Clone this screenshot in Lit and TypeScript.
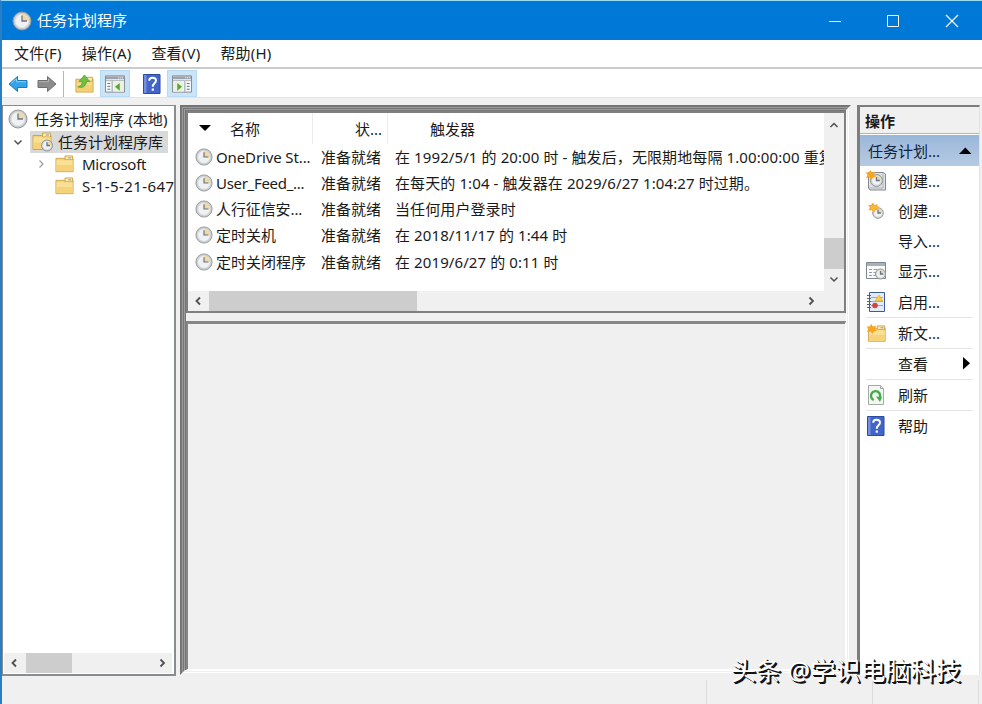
import { LitElement, html, css, svg, nothing } from "lit";
import { customElement, property } from "lit/decorators.js";
import { classMap } from "lit/directives/class-map.js";
import { styleMap } from "lit/directives/style-map.js";

const folder = svg`
  <path d="M1 3.500h18v14H1z" fill="#f3d277" stroke="#d0a548"/>
  <path d="M10.500 1h8v4h-8z" fill="#fbe8b0" stroke="#d0a548"/>
  <path d="M14 3h3" stroke="#7d9dc0" />
  <path d="M1.500 5.500h17v11.500h-17z" fill="#fae096"/>
  <path d="M1.500 10.500h17v6.500h-17z" fill="#f3cd6d" opacity=".7"/>`;

const clock = (cx: number, cy: number, r: number) => svg`
  <circle cx=${cx} cy=${cy} r=${r} fill="#c9cccf" stroke="#94989c"/>
  <circle cx=${cx} cy=${cy} r=${r * 0.76} fill="#eff1f3" stroke="#dfe2e4" stroke-width=".7"/>
  <path d=${`M${cx} ${cy - r * 0.74}A${r * 0.74} ${r * 0.74} 0 0 1 ${cx + r * 0.74} ${cy}H${cx}z`} fill="#f0d9a0"/>
  <path d=${`M${cx} ${cy - r * 0.6}V${cy}H${cx + r * 0.55}`} fill="none" stroke="#64748a" stroke-width="1.300"/>`;

const star = (x: number, y: number) => svg`
  <path transform=${`translate(${x} ${y})`} d="M0-5L1.300-2.500 4.500-3.200 3.500-.3 5.500 2 2.500 2.500 .8 5-1 2.500-4.500 3-3 0-5-2.500-2-2.500z" fill="#f8a622"/>`;

const panel = (flip: boolean) => svg`
  <path d="M.5 1.500h20v17H.5z" fill="#f7f8fa" stroke="#81868f"/>
  <path d="M1 2h19v3H1z" fill="#9ba2ad"/><path d="M14 3.500h1M16 3.500h1M18 3.500h1" stroke="#fff"/>
  <path d="M1 6.500h19" stroke="#a9afb8"/>
  <g transform=${flip ? "translate(21 0) scale(-1 1)" : ""}>
    <path d="M7.500 7v11" stroke="#9097a1"/>
    <path d="M2.500 9.500h3M2.500 12.500h3M2.500 15.500h3" stroke="#56708c"/>
    <path d="M9 8h11v10H9z" fill="#e9f2e0"/>
    <path d="M15.500 9v8l-5-4z" fill="#58a62c"/>
  </g>`;

const icons: Record<string, unknown> = {
  clock: clock(10, 10, 9),
  folder,
  library: svg`${folder}${clock(15, 13.5, 5.5)}`,
  back: svg`<path d="M1 10l8.500-7.500v4h9.500v7H9.500v4z" fill="#31a5e8" stroke="#2477b2"/><path d="M3 9.500l5.500-4.800v3H18" fill="none" stroke="#85d3fa"/>`,
  forward: svg`<path d="M19 10l-8.500-7.500v4H1v7h9.500v4z" fill="#8c8c8c" stroke="#6e6e6e"/><path d="M2 7.700h9.500v-3" fill="none" stroke="#b3b3b3"/>`,
  up: svg`<path d="M1 5.500h18v13.500H1z" fill="#f7da86" stroke="#cda245"/><path d="M12 3.500h6.500v4H12z" fill="#fbe8b0" stroke="#cda245"/><path d="M1.500 12h17v6.500h-17z" fill="#f0c866" opacity=".6"/>
    <path d="M3 13.500c3.500-.5 4.500-2.500 4.500-5.500H4L10 1l5.500 7H12c0 4.500-4 7.500-9 5.500z" fill="#6cc043" stroke="#4a9a2b" stroke-width=".7"/>`,
  help: svg`<path d="M1.500 .5h16.500v19H1.500z" fill="#4364c8" stroke="#2b4aa0"/><path d="M2 1h2.500v18H2z" fill="#7390e0"/>
    <path d="M7.200 6.800c0-4 6.800-4 6.800-.3 0 2.800-3.200 2.800-3.200 6.200" fill="none" stroke="#fff" stroke-width="2"/><path d="M9.700 14.500h2.200v2.200H9.700z" fill="#fff"/>`,
  task: svg`<path d="M2.500 1.500h15l2 1.500v16H4L2.500 17z" fill="#dfe1e4" stroke="#858a90"/><path d="M17 2v15H3" fill="none" stroke="#aeb2b7"/>${clock(10.5, 9.5, 6)}${star(4.500, 4)}`,
  basic: svg`${clock(12, 12, 5.300)}${star(7, 6.5)}<path d="M4 4.500h8l1.500 3H9v4l-3-2z" fill="#f8b83d"/>`,
  display: svg`<path d="M.5 1.500h19v16H.5z" fill="#fafbfc" stroke="#7f8790"/><path d="M1 2h18v3H1z" fill="#a8b0ba"/><path d="M3 8.500h3M7.500 8.500h4M3 11.500h3M7.500 11.500h3M3 14.500h3M7.500 14.500h3" stroke="#8f9db0"/>${clock(14.500, 13, 5)}`,
  enable: svg`<path d="M3.500 .5h15v19h-15z" fill="#e2ebf8" stroke="#3f5b94"/><path d="M5 5.500h12M5 9.500h12M5 13.500h12" stroke="#8fa8d4"/><path d="M1 3.500h4M1 6.500h4M1 9.500h4M1 12.500h4M1 15.500h4" stroke="#59616b"/>
    <path d="M13 3l4 6h-8z" fill="#f9cf3c" stroke="#e0b030" stroke-width=".6"/><circle cx="9" cy="13.500" r="2.800" fill="#d2453f"/>`,
  newfolder: svg`<g transform="translate(1.500 2) scale(.93)">${folder}</g>${star(5.5, 6)}`,
  refresh: svg`<path d="M2.500.5h12l3 3v16h-15z" fill="#f4f6f4" stroke="#a5aaa5"/><path d="M14.500 .5v3h3" fill="#ddd" stroke="#a5aaa5"/>
    <path d="M7.800 15a4.600 4.600 0 1 1 5.500-1.500" fill="none" stroke="#3fae49" stroke-width="2.400"/><path d="M10 11.500l6 .5-2 5z" fill="#3fae49"/>`,
  left: svg`<path d="M12 6.500l-3.500 3.500 3.500 3.500" fill="none" stroke="#505050" stroke-width="1.800"/>`,
  right: svg`<path d="M8.500 6.500l3.500 3.500-3.500 3.500" fill="none" stroke="#505050" stroke-width="1.800"/>`,
  thin: svg`<path d="M8.500 6.500l3.500 3.500-3.500 3.500" fill="none" stroke="#9a9a9a" stroke-width="1.200"/>`,
  chevup: svg`<path d="M6.500 12l3.500-3.500 3.500 3.500" fill="none" stroke="#505050" stroke-width="1.500"/>`,
  chevdown: svg`<path d="M6.500 8.500l3.500 3.500 3.500-3.500" fill="none" stroke="#505050" stroke-width="1.500"/>`,
  tridown: svg`<path d="M4 6h12l-6 6z"/>`,
  triup: svg`<path d="M4 13h12.500l-6.200-6.500z"/>`,
  triright: svg`<path d="M7 3v12.500l7-6.200z"/>`,
  min: svg`<path d="M4 10.500h12" stroke="#fff"/>`,
  max: svg`<path d="M4.500 4.500h11v11h-11z" fill="none" stroke="#fff"/>`,
  close: svg`<path d="M4 4l12 12M16 4L4 16" stroke="#fff" stroke-width="1.200"/>`,
  paneltree: panel(false),
  panelaction: panel(true),
};

@customElement("ui-icon")
export class UiIcon extends LitElement {
  @property() name = "";
  @property({ type: Number }) size = 20;
  static styles = css`:host { display: block; flex: none; } svg { display: block; overflow: visible; }`;
  render() {
    const w = this.name.startsWith("panel") ? 21 : 20;
    return html`<svg width=${this.size} height=${this.size} viewBox=${`0 0 ${w} 20`}>${icons[this.name] ?? nothing}</svg>`;
  }
}

interface Task { name: string; trigger: string; tracking: number }
const tasks: Task[] = [
  { name: "OneDrive St...", tracking: -0.12, trigger: "在 1992/5/1 的 20:00 时 - 触发后，无限期地每隔 1.00:00:00 重复" },
  { name: "User_Feed_...", tracking: -0.3, trigger: "在每天的 1:04 - 触发器在 2029/6/27 1:04:27 时过期。" },
  { name: "人行征信安...", tracking: -0.1, trigger: "当任何用户登录时" },
  { name: "定时关机", tracking: 0, trigger: "在 2018/11/17 的 1:44 时" },
  { name: "定时关闭程序", tracking: 0, trigger: "在 2019/6/27 的 0:11 时" },
];

interface Action { icon: string; label: string; height: number; line?: boolean; more?: boolean }
const actions: Action[] = [
  { icon: "task", label: "创建...", height: 30 },
  { icon: "basic", label: "创建...", height: 30 },
  { icon: "", label: "导入...", height: 30 },
  { icon: "display", label: "显示...", height: 30 },
  { icon: "enable", label: "启用...", height: 32, line: true },
  { icon: "newfolder", label: "新文...", height: 31, line: true },
  { icon: "", label: "查看", height: 31, line: true, more: true },
  { icon: "refresh", label: "刷新", height: 31, line: true },
  { icon: "help", label: "帮助", height: 30 },
];

@customElement("app-root")
export class AppRoot extends LitElement {
  static styles = css`
    :host { display: block; width: 982px; height: 704px; overflow: hidden; font: 15px/20px "Noto Sans", "Noto Sans CJK SC", sans-serif; color: #1a1a1a; letter-spacing: 0; }
    * { box-sizing: border-box; }
    .window { position: relative; height: 704px; display: flex; flex-direction: column; background: #f0f0f0; border-left: 2px solid #2a7fc4; border-top: 1px solid #9bdcf0; white-space: nowrap; }
    .title { height: 39px; flex: none; background: #0078d7; color: #fff; display: flex; align-items: center; padding-left: 10px; gap: 5px; }
    .title span { flex: 1; padding-bottom: 2px; }
    .controls { display: flex; gap: 38px; padding: 0 20px 0 0; }
    .controls ui-icon:last-child { margin-left: 1px; }
    .menu { height: 29px; flex: none; background: #fff; border-bottom: 2px solid #cbcbcb; display: flex; align-items: center; padding: 0 0 1px 12px; gap: 20px; letter-spacing: .2px; }
    .tools { height: 29px; flex: none; background: #fff; border-bottom: 1px solid #e3e3e3; display: flex; align-items: center; padding: 1px 0 0 6px; }
    .divider { width: 1px; height: 26px; background: #b5b5b5; margin: 0 11px 0 6px; }
    .fwd { margin-left: 9px; }
    .toggle { width: 30px; height: 27px; background: #cce4f7; border: 1px solid #b9daf3; display: flex; align-items: center; justify-content: center; }
    .t1 { margin: 0 12px 0 6px; }
    .t2 { margin-left: 5px; }
    .body { height: 571px; margin-top: 7px; flex: none; display: flex; }
    .tree { width: 174px; flex: none; border: 1px solid #888c90; border-width: 1px 2px 2px 1px; background: #fff; display: flex; flex-direction: column; overflow: hidden; }
    .node { display: flex; align-items: center; height: 22px; }
    .node span { padding-bottom: 1px; }
    .tag { display: flex; align-items: center; height: 22px; padding: 0 5px 0 2px; gap: 8px; }
    .sel { background: #d9d9d9; gap: 6px; }
    .root { padding-left: 5px; gap: 6px; height: 25px; }
    .root span { padding: 0; letter-spacing: .05px; }
    .l1 { padding-left: 5px; gap: 2px; }
    .l2 { padding-left: 28px; gap: 2px; }
    .leaf { padding-left: 50px; }
    .ms { letter-spacing: -.25px; }
    .sid { letter-spacing: .4px; }
    .grow { flex: 1; }
    .hbar { height: 20px; background: #f0f0f0; display: flex; align-items: center; flex: none; }
    .thumb { background: #cdcdcd; height: 100%; }
    .tree .hbar { margin: 0 2px 1px 1px; }
    .frame { border: 0 solid; display: flex; flex-direction: column; flex: 1; min-height: 0; }
    .dark { border-color: #757575 #efefef #efefef #757575; }
    .light { border-color: #9d9d9d #fff #fff #9d9d9d; }
    .f1 { flex: none; margin-left: 4px; width: 671px; height: 570px; border-width: 2px; }
    .thinframe { border-width: 1px; }
    .inner { border-width: 1px 0 0 1px; }
    .list { height: 202px; border: 2px solid #808080; background: #fff; display: flex; flex-direction: column; flex: none; width: 660px; }
    .rows { flex: 1; min-height: 0; display: flex; }
    .table { width: 636px; flex: none; overflow: hidden; }
    .head, .row { display: grid; grid-template-columns: 125px 75px 1fr; align-items: center; }
    .head { height: 31px; }
    .head div { height: 31px; display: flex; align-items: center; border-right: 1px solid #ececec; }
    .head div:last-child { border: 0; padding-left: 42px; }
    .head .sort { gap: 15px; padding-left: 7px; }
    .head .state { justify-content: flex-end; padding-right: 5px; }
    .row { height: 26.250px; padding-bottom: 1px; }
    .row .name { display: flex; align-items: center; gap: 3px; padding-left: 7px; }
    .row .state { padding-left: 8px; }
    .row .trigger { padding-left: 7px; letter-spacing: .1px; }
    .vbar { flex: 1; background: #f0f0f0; display: flex; flex-direction: column; align-items: center; padding: 2px 0; }
    .vbar .thumb { width: 100%; height: 31px; flex: none; }
    .corner { width: 23px; }
    .detail { margin-top: 8px; flex: 1; border-top: 3px solid #868686; border-left: 2px solid #868686; border-bottom: 1px solid #fff; border-right: 1px solid #fff; width: 660px; }
    .actions { margin-left: 6px; width: 123px; height: 570px; background: #fff; border-left: 3px solid #7d7d7d; border-top: 2px solid #7d7d7d; border-right: 1px solid #e3e3e3; }
    .heading { height: 27px; background: #f0f0f0; border-bottom: 1px solid #b5b5b5; font-weight: 700; padding: 4px 0 0 5px; }
    .group { height: 31px; margin: 1px 0 0; background: linear-gradient(#9ab6d8, #b6cbe3); display: flex; align-items: center; justify-content: space-between; padding: 0 4px 0 8px; color: #10243f; }
    .action { display: flex; align-items: center; gap: 12px; margin: 0 6px 0 6px; }
    .action span { flex: 1; }
    .slot { width: 20px; }
    .line { border-bottom: 1px solid #e4e4e4; }
    .action .slot + span + ui-icon { margin-right: -3px; }
    .status { flex: 1; display: flex; padding-top: 4px; }
    .status div { border-right: 1px solid #dcdcdc; }
    .s1 { width: 705px; } .s2 { width: 166px; } .s3 { width: 106px; }
    .mark { position: absolute; left: 729px; top: 651px; font-size: 25px; line-height: 36px; color: #fff; letter-spacing: .1px; text-shadow: 2px 2px 0 #111, 1px 1px 0 #111; }
  `;

  private icon(name: string, size = 20) {
    return html`<ui-icon .name=${name} .size=${size}></ui-icon>`;
  }

  render() {
    return html`<div class="window">
      <div class="title">${this.icon("clock")}<span>任务计划程序</span>
        <div class="controls">${this.icon("min")}${this.icon("max")}${this.icon("close")}</div></div>
      <div class="menu">${["文件(F)", "操作(A)", "查看(V)", "帮助(H)"].map((m) => html`<span>${m}</span>`)}</div>
      <div class="tools">
        ${this.icon("back")}<div class="fwd">${this.icon("forward")}</div><div class="divider"></div>
        ${this.icon("up", 19)}<div class="toggle t1">${this.icon("paneltree")}</div>
        ${this.icon("help")}<div class="toggle t2">${this.icon("panelaction")}</div>
      </div>
      <div class="body">
        <div class="tree">
          <div class="node root">${this.icon("clock", 20)}<span>任务计划程序 (本地)</span></div>
          <div class="node l1">${this.icon("chevdown")}<div class="tag sel">${this.icon("library")}<span>任务计划程序库</span></div></div>
          <div class="node l2">${this.icon("thin")}<div class="tag">${this.icon("folder", 19)}<span class="ms">Microsoft</span></div></div>
          <div class="node leaf"><div class="tag">${this.icon("folder", 19)}<span class="sid">S-1-5-21-647</span></div></div>
          <div class="grow"></div>
          <div class="hbar">${this.icon("left")}<div class="thumb" style=${styleMap({ width: "46px", marginLeft: "2px" })}></div><div class="grow"></div>${this.icon("right")}</div>
        </div>
        <div class="frame dark f1"><div class="frame light thinframe"><div class="frame dark thinframe"><div class="frame light thinframe"><div class="frame dark inner">
          <div class="list">
            <div class="rows">
              <div class="table">
                <div class="head"><div class="sort">${this.icon("tridown")}<span>名称</span></div><div class="state">状...</div><div>触发器</div></div>
                ${tasks.map((t) => html`<div class="row"><div class="name" style=${styleMap({ letterSpacing: `${t.tracking}px` })}>${this.icon("clock", 18)}<span>${t.name}</span></div><div class="state">准备就绪</div><div class="trigger">${t.trigger}</div></div>`)}
              </div>
              <div class="vbar">${this.icon("chevup")}<div class="grow"></div><div class="thumb"></div>${this.icon("chevdown")}</div>
            </div>
            <div class="hbar">${this.icon("left")}<div class="thumb" style=${styleMap({ width: "208px", marginLeft: "1px" })}></div><div class="grow"></div>${this.icon("right")}<div class="corner"></div></div>
          </div>
          <div class="detail"></div>
        </div></div></div></div></div>
        <div class="actions">
          <div class="heading">操作</div>
          <div class="group"><span>任务计划...</span>${this.icon("triup")}</div>
          ${actions.map((a) => html`<div class=${classMap({ action: true, line: !!a.line })} style=${styleMap({ height: `${a.height}px` })}>
            <div class="slot">${a.icon ? this.icon(a.icon) : nothing}</div><span>${a.label}</span>${a.more ? this.icon("triright") : nothing}</div>`)}
        </div>
      </div>
      <div class="status"><div class="s1"></div><div class="s2"></div><div class="s3"></div></div>
      <div class="mark">头条 @学识电脑科技</div>
    </div>`;
  }
}
